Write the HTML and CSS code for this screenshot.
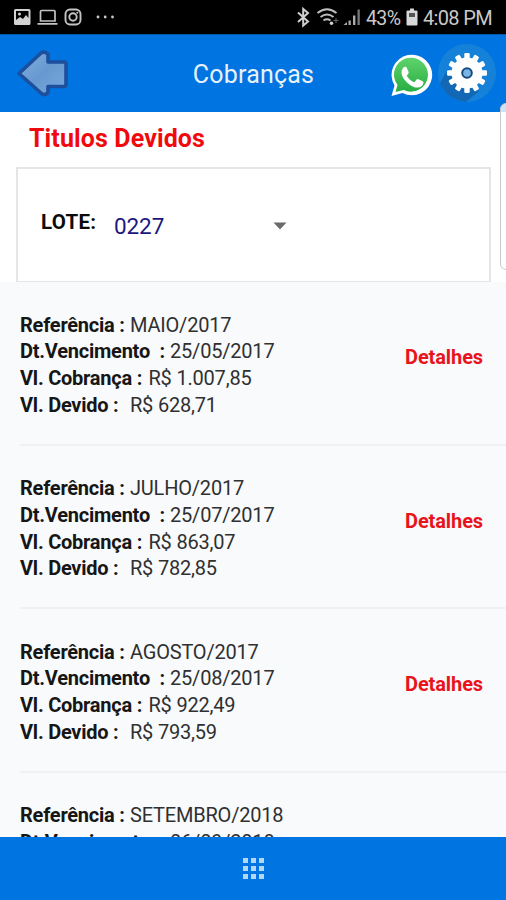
FILE: index.html
```html
<!DOCTYPE html>
<html lang="pt-BR">
<head>
<meta charset="utf-8">
<title>Cobranças</title>
<link rel="stylesheet" href="styles.css">
</head>
<body>
<div class="screen">
  <div class="status">
    <svg class="status-left" width="120" height="34" viewBox="0 0 120 34">
      <path fill="#d2d2d2" fill-rule="evenodd" d="M15.500 9h13.500q1.500 0 1.500 1.500v13q0 1.500-1.500 1.500h-13.500q-1.500 0-1.500-1.500v-13q0-1.500 1.500-1.500zM16 11v9l4-3 3 2 3-4 2.500 3v-7z"/>
      <circle cx="19.500" cy="14" r="1.500" fill="#d2d2d2"/>
      <path fill="none" stroke="#c4c4c4" stroke-width="1.700" d="M40.500 21v-9.500q0-1 1-1h12.500q1 0 1 1v9.500zM37.500 23.800h20"/>
      <g fill="none" stroke="#c4c4c4" stroke-width="1.900"><rect x="65.500" y="9.500" width="15" height="15" rx="4.500"/><circle cx="73" cy="17" r="3.700"/></g>
      <circle cx="77.300" cy="12.800" r="1" fill="#c4c4c4"/>
      <g fill="#c8c8c8"><circle cx="98" cy="17" r="1.400"/><circle cx="105.200" cy="17" r="1.400"/><circle cx="112.500" cy="17" r="1.400"/></g>
    </svg>
    <div class="status-right">
      <svg width="66" height="34" viewBox="296 0 66 34">
        <path fill="none" stroke="#cfcfcf" stroke-width="2" d="M298 12.500l10 9-4.800 4v-16.500l4.800 4-10 9"/>
        <g fill="none" stroke="#bdbdbd" stroke-width="1.900"><path d="M317.500 13q9.500-7.500 19 0"/><path d="M320.500 17q6.500-5 13 0"/><path d="M323.500 20.500q3.500-2.500 7 0"/></g>
        <circle cx="331.500" cy="23.300" r="1.800" fill="#cfcfcf"/><path d="M336 18v5M333.500 20.500h5" stroke="#666"/>
        <g fill="#aaa"><path d="M343.500 25l3.500-3v3z"/><path d="M348.500 20.500h2.300v4.500h-2.300z"/><path d="M353 15.500h2.400v9.500h-2.400z"/><path fill="#777" d="M357.500 9.500h2.300v15.500h-2.300z"/></g>
      </svg>
      <span class="percent">43%</span>
      <svg class="battery" width="12" height="34" viewBox="0 0 12 34"><path fill="#d8d8d8" d="M4 8.500h4v2h2.500q1 0 1 1v13q0 1-1 1h-9q-1 0-1-1v-13q0-1 1-1h2.500z"/><path fill="#555" d="M3 13h6v4h-6z"/></svg>
      <span class="clock">4:08 PM</span>
    </div>
  </div>
  <header class="appbar">
    <svg class="back" width="54" height="50" viewBox="16 49 54 50">
      <defs><linearGradient id="arrow" x1="0" y1="0" x2="1" y2="1"><stop offset="0" stop-color="#84afdc"/><stop offset=".5" stop-color="#6799d0"/><stop offset="1" stop-color="#79a8dc"/></linearGradient></defs>
      <path d="M19 73.500l21.500-20q2-2 5-1l2.500 1.500v8h16q2 0 2 2v20.500q0 2-2 2h-16v6q-3 3.500-6.500 1z" fill="url(#arrow)" stroke="#1c4f9c" stroke-width="3.600" stroke-linejoin="round"/>
    </svg>
    <h1>Cobranças</h1>
    <svg class="actions" width="116" height="64" viewBox="385 41 116 64">
      <defs><linearGradient id="wa" x1="0" y1="0" x2="0" y2="1"><stop offset="0" stop-color="#5fd36b"/><stop offset="1" stop-color="#27ad42"/></linearGradient></defs>
      <path fill="#fff" d="M391.500 95l3-10.500a20.300 20.300 0 1 1 8 7.500z"/>
      <path fill="url(#wa)" d="M395.500 91l2-7a17 17 0 1 1 6.200 5z"/>
      <path fill="#fff" d="M404.500 65.800q1.600-.5 2.300 1l1.800 4.200q.3 1-.5 1.900l-1.400 1.800q2.900 4.700 7.700 6.600l2.200-2.700q.8-.9 1.800-.4l4.300 2.100q1 .5.800 1.500-.8 4.600-6 4.800-4.700 0-10-4.700-5.900-5.600-6-10.200 0-4 3-5.900z"/>
      <circle cx="467" cy="72" r="29" fill="#1681d8"/>
      <path fill="#1268b5" d="M448 68l-8 14q7 17 26 19l13-11z"/>
      <g fill="#fff" transform="translate(467 72)">
        <circle r="15.500"/>
        <rect x="-2.700" y="-20" width="5.400" height="40" rx="1.300"/><rect x="-2.700" y="-20" width="5.400" height="40" rx="1.300" transform="rotate(30)"/><rect x="-2.700" y="-20" width="5.400" height="40" rx="1.300" transform="rotate(60)"/><rect x="-2.700" y="-20" width="5.400" height="40" rx="1.300" transform="rotate(90)"/><rect x="-2.700" y="-20" width="5.400" height="40" rx="1.300" transform="rotate(120)"/><rect x="-2.700" y="-20" width="5.400" height="40" rx="1.300" transform="rotate(150)"/>
        <circle r="4.800" fill="#7bb4e6" stroke="#174b7d" stroke-width="2"/>
      </g>
    </svg>
  </header>
  <section class="filter">
    <h2>Titulos Devidos</h2>
    <div class="card">
      <b>LOTE:</b><span class="lot">0227</span>
      <svg width="14" height="8" viewBox="0 0 14 8"><path fill="#6b6b6b" d="M.5.500h13l-6.500 7z"/></svg>
    </div>
  </section>
  <main class="list">
    <article class="row">
      <div class="info"><p><b class="k1">Referência :</b><span>MAIO/2017</span></p><p><b class="k2">Dt.Vencimento&nbsp; :</b><span>25/05/2017</span></p><p><b class="k3">Vl. Cobrança :</b><span>R$ 1.007,85</span></p><p><b class="k4">Vl. Devido :</b><span>R$ 628,71</span></p></div>
      <a class="details">Detalhes</a>
    </article>
    <article class="row">
      <div class="info"><p><b class="k1">Referência :</b><span>JULHO/2017</span></p><p><b class="k2">Dt.Vencimento&nbsp; :</b><span>25/07/2017</span></p><p><b class="k3">Vl. Cobrança :</b><span>R$ 863,07</span></p><p><b class="k4">Vl. Devido :</b><span>R$ 782,85</span></p></div>
      <a class="details">Detalhes</a>
    </article>
    <article class="row">
      <div class="info"><p><b class="k1">Referência :</b><span>AGOSTO/2017</span></p><p><b class="k2">Dt.Vencimento&nbsp; :</b><span>25/08/2017</span></p><p><b class="k3">Vl. Cobrança :</b><span>R$ 922,49</span></p><p><b class="k4">Vl. Devido :</b><span>R$ 793,59</span></p></div>
      <a class="details">Detalhes</a>
    </article>
    <article class="row">
      <div class="info"><p><b class="k1">Referência :</b><span>SETEMBRO/2018</span></p><p><b class="k2">Dt.Vencimento&nbsp; :</b><span>06/09/2018</span></p></div>
    </article>
  </main>
  <footer class="bottom">
    <div class="grid"><i></i><i></i><i></i><i></i><i></i><i></i><i></i><i></i><i></i></div>
  </footer>
  <div class="edge"></div>
</div>
</body>
</html>
```
FILE: styles.css
```css
* { box-sizing: border-box; }
body { margin: 0; font-family: Roboto, sans-serif; background: #fff; }
h1, h2, p { margin: 0; }
svg { display: block; flex: none; }
b { font-weight: 700; }

.screen { position: relative; width: 506px; height: 900px; overflow: hidden; display: flex; flex-direction: column; }

.status { height: 34px; flex: none; background: #000; display: flex; justify-content: space-between; }
.status-right { display: flex; align-items: center; width: 210px; color: #c9c9c9; font-size: 20px; white-space: nowrap; }
.percent { width: 35px; margin-left: 4px; font-size: 19.500px; letter-spacing: -.6px; padding-top: 2px; }
.battery { margin-left: 5px; }
.clock { margin-left: 5px; letter-spacing: -.65px; padding-top: 2px; }

.appbar { height: 78px; flex: none; background: #0074e0; border-top: 1px solid #075aa8; display: grid; grid-template-columns: 121px 1fr 121px; align-items: center; }
.back { margin-left: 16px; }
.appbar h1 { color: #e6f1fc; font-size: 25px; font-weight: 400; text-align: center; line-height: 30px; padding: 3px 0 0 1px; letter-spacing: .2px; }

.filter { height: 170px; flex: none; background: #fff; padding: 10px 15px 0 16px; }
.filter h2 { color: #f00a0e; font-size: 25px; line-height: 34px; font-weight: 700; padding-left: 13px; letter-spacing: .12px; }
.card { height: 116px; margin-top: 11px; border: 2px solid #e5e5e5; display: flex; align-items: center; padding-left: 23px; }
.card b { width: 73px; font-size: 20.500px; line-height: 24px; padding-bottom: 7px; color: #0b0b0b; letter-spacing: .3px; }
.lot { width: 159px; font-size: 22.500px; line-height: 26px; padding-top: 2px; color: #1d1780; letter-spacing: -.1px; }
.card svg { margin-top: 2px; }

.list { flex: 1; min-height: 0; overflow: hidden; background: #f8fafc; }
.row { height: 163.500px; margin-left: 20px; padding-top: 29.500px; border-bottom: 2px solid #f0f1f3; display: flex; justify-content: space-between; color: #161616; }
.info p { display: flex; height: 26.800px; line-height: 26.800px; font-size: 20px; white-space: nowrap; }
.info b { letter-spacing: -.24px; }
.info span { color: #303030; letter-spacing: -.2px; }
.k1 { width: 110px; }
.k2 { width: 150px; }
.k3 { width: 128.500px; }
.k4 { width: 110px; }
.details { width: 101px; padding-top: 31.500px; line-height: 28px; font-size: 20px; font-weight: 700; letter-spacing: -.1px; color: #e8141b; }

.bottom { height: 63px; flex: none; background: #0074e0; display: flex; justify-content: center; align-items: center; }
.grid { display: grid; grid-template-columns: repeat(3, 5.500px); grid-auto-rows: 5.500px; gap: 2.500px; margin-left: 1px; }
.grid i { background: #b5d7f6; }

.edge { position: absolute; left: 500px; top: 103px; width: 16px; height: 167px; border: 1px solid #c9c9c9; border-radius: 6px; background: rgba(255, 255, 255, .8); }
```
